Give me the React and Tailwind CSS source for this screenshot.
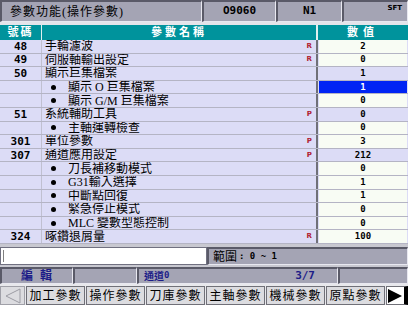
import React from 'react';

const rows = [
  { n: '48', t: '手輪濾波', m: 'R', v: '2', w: true },
  { n: '49', t: '伺服軸輸出設定', m: 'R', v: '0', w: true },
  { n: '50', t: '顯示巨集檔案', v: '1' },
  { b: true, t: '顯示 O 巨集檔案', v: '1', sel: true },
  { b: true, t: '顯示 G/M 巨集檔案', v: '0', w: true },
  { n: '51', t: '系統輔助工具', m: 'P', v: '0' },
  { b: true, t: '主軸運轉檢查', v: '0', w: true },
  { n: '301', t: '單位參數', m: 'P', v: '3', w: true },
  { n: '307', t: '通道應用設定', m: 'P', v: '212' },
  { b: true, t: '刀長補移動模式', v: '0', w: true },
  { b: true, t: 'G31輸入選擇', v: '1', w: true },
  { b: true, t: '中斷點回復', v: '1', w: true },
  { b: true, t: '緊急停止模式', v: '0', w: true },
  { b: true, t: 'MLC 變數型態控制', v: '0', w: true },
  { n: '324', t: '啄鑽退屑量', m: 'R', v: '100', w: true },
];

const cjk = "font-['Liberation_Serif','Noto_Sans_CJK_TC',serif]";
const mono = "font-['DejaVu_Sans_Mono',monospace]";
const cell = 'bg-[#a4a4b4] border-t-2 border-l-2 border-t-[#5a5a68] border-l-[#5a5a68] border-b border-r border-b-[#e8e8f0] border-r-[#e8e8f0]';
const keys = ['加工參數', '操作參數', '刀庫參數', '主軸參數', '機械參數', '原點參數'];

export default function App() {
  return (
    <div className="w-[418px] h-[312px] bg-white">
      <div className={`w-[408px] flex flex-col ${cjk}`}>
        {/* title bar */}
        <div className="h-[22px] flex bg-[#c8c8d0]">
          <div className={`w-[202px] ${cell} flex items-center pl-[8px] text-[12px] tracking-[1px] text-black`}>參數功能(操作參數)</div>
          <div className={`w-[74px] ${cell} flex items-center justify-center ${mono} font-bold text-[11px] text-black`}>O9060</div>
          <div className={`w-[66px] ${cell} flex items-center justify-center ${mono} font-bold text-[11px] text-black`}>N1</div>
          <div className={`flex-1 ${cell} flex items-start justify-end pr-[5px] pt-[1px] font-['DejaVu_Sans',sans-serif] font-bold text-[7px] text-black`}>SFT</div>
        </div>
        <div className="h-[3px] bg-[#e4e4ea]" />
        {/* header */}
        <div className="h-[15px] flex bg-[#00939c] text-white font-bold text-[11px] leading-none">
          <div className="w-[42px] flex items-center justify-center tracking-[2px] border-r border-[#e0f0f0]">號碼</div>
          <div className="w-[274px] flex items-center justify-center tracking-[3px]">參數名稱</div>
          <div className="flex-1 flex items-center justify-center border-l-2 border-[#e0f0f0] tracking-[5px]">數值</div>
        </div>
        {/* rows */}
        <div className="h-[204px] grid grid-rows-[repeat(15,1fr)] bg-[#dcdcf6]">
          {rows.map((r, i) => (
            <div key={i} className="flex border-b border-[#b4b4c4] min-h-0 overflow-hidden">
              <div className={`w-[42px] flex items-center justify-center ${mono} font-bold text-[11px] leading-none text-black border-r border-[#c0c0d0]`}>{r.n || ''}</div>
              <div className="w-[274px] flex items-center pl-[3px] pr-[4px] text-[12px] text-black leading-none">
                {r.b && <span className="w-[5px] h-[5px] rounded-full bg-black ml-[6px] mr-[12px]" />}
                <span>{r.t}</span>
                <span className="ml-auto font-['DejaVu_Sans',sans-serif] font-bold text-[7px] text-[#b02030]">{r.m || ''}</span>
              </div>
              <div className="flex-1 flex border-l-2 border-[#707078]">
                <div className={`flex-1 flex items-center justify-center ${mono} font-bold text-[9px] leading-none mx-[1px] ${r.sel ? 'bg-[#0024f4] text-white' : r.w ? 'bg-[#f8fcf4] text-black' : 'text-black'}`}>{r.v}</div>
              </div>
            </div>
          ))}
        </div>
        {/* input row */}
        <div className="h-[21px] flex bg-[#c8c8d0] pt-[3px]">
          <div className="w-[207px] bg-white border border-[#707080] flex items-center">
            <div className="w-px h-[12px] bg-[#808080] ml-[2px]" />
          </div>
          <div className={`flex-1 ${cell} flex items-center pl-[4px] text-[12px] text-black`}>範圍<span className={`${mono} font-bold text-[9px] ml-[2px]`}>: 0 ~ 1</span></div>
        </div>
        {/* status row */}
        <div className="h-[19px] flex bg-[#c8c8d0] pt-[2px]">
          <div className={`w-[73px] ${cell} flex items-center justify-center text-[12px] font-bold text-[#1c1c88] tracking-[7px] pl-[6px]`}>編輯</div>
          <div className={`w-[64px] ${cell}`} />
          <div className={`w-[201px] ${cell} flex items-center pl-[5px] pr-[22px] text-[10px] font-bold text-[#1c1c88]`}>
            通道<span className={`${mono} text-[9px]`}>0</span>
            <span className={`ml-auto ${mono} text-[11px]`}>3/7</span>
          </div>
          <div className={`flex-1 ${cell}`} />
        </div>
        {/* soft keys */}
        <div className="h-[21px] flex bg-[#e8e8ec] pt-[2px] gap-px">
          <div className="w-[25px] flex items-center justify-center bg-[#dcdce0] border border-[#a0a0a8]">
            <svg width="18" height="16" viewBox="0 0 18 16"><path d="M16 1 L2 8 L16 15 Z" fill="none" stroke="#9c9ca4" strokeWidth="1" /></svg>
          </div>
          {keys.map((k) => (
            <div key={k} className="w-[59px] flex items-center justify-center bg-[#dcdce0] border border-[#707078] text-[12px] tracking-[1px] text-black">{k}</div>
          ))}
          <div className="flex-1 flex items-center bg-white border border-[#707078] border-r-4 border-r-black">
            <svg width="16" height="16" viewBox="0 0 16 16"><path d="M1 1 L15 8 L1 15 Z" fill="#000" /></svg>
          </div>
        </div>
      </div>
    </div>
  );
}
